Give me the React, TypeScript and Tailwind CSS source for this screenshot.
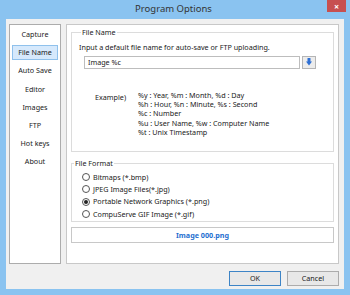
import React from "react";

const NAV = ["Capture", "File Name", "Auto Save", "Editor", "Images", "FTP", "Hot keys", "About"];

const FORMATS = [
  { label: "Bitmaps (*.bmp)", on: false },
  { label: "JPEG Image Files(*.jpg)", on: false },
  { label: "Portable Network Graphics (*.png)", on: true },
  { label: "CompuServe GIF Image (*.gif)", on: false },
];

const HELP = [
  "%y : Year, %m : Month, %d : Day",
  "%h : Hour, %n : Minute, %s : Second",
  "%c : Number",
  "%u : User Name, %w : Computer Name",
  "%t : Unix Timestamp",
];

function Radio({ on }: { on: boolean }) {
  return (
    <span className="w-[8px] h-[8px] rounded-full border border-[#555] bg-white flex items-center justify-center shrink-0">
      {on && <span className="w-[4px] h-[4px] rounded-full bg-[#222]" />}
    </span>
  );
}

export default function App() {
  return (
    <div
      className="w-[350px] h-[295px] bg-[#8ac3f0] flex flex-col text-[7.2px] text-[#1a1a1a] overflow-hidden"
      style={{ fontFamily: '"Noto Sans", "Open Sans", sans-serif' }}
    >
      {/* title bar */}
      <div className="h-[19px] shrink-0 flex items-start">
        <div className="flex-1 h-[19px] flex items-center justify-center pl-[20px] text-[9.5px] text-[#333]">
          Program Options
        </div>
        <div className="w-[19px] h-[12px] mr-[4px] bg-[#c75050] flex items-center justify-center text-white text-[9px] font-bold leading-none">
          ×
        </div>
      </div>

      {/* client */}
      <div className="mx-[6px] mb-[6px] h-[270px] bg-[#f0f0f0] flex flex-col pt-[5px] pl-[3px] pr-[5px]">
        <div className="flex gap-[5px] h-[240px] shrink-0">
          <nav className="w-[52px] bg-white border border-[#acacac] flex flex-col items-stretch pt-[2px] px-[2px]">
            {NAV.map((n) => (
              <div
                key={n}
                className={
                  "h-[15px] mb-[3.2px] flex items-center justify-center " +
                  (n === "File Name" ? "bg-[#d6e9fc] border border-[#8fc1ec]" : "")
                }
              >
                {n}
              </div>
            ))}
          </nav>

          <div className="flex-1 bg-white border border-[#c8c8c8] px-[4px] pt-[3px] flex flex-col">
            <fieldset className="border border-[#dcdcdc] h-[124px] px-[7px] shrink-0">
              <legend className="px-[1px] ml-[2px] leading-[8px]">File Name</legend>
              <div className="mt-[6px]">Input a default file name for auto-save or FTP uploading.</div>
              <div className="flex items-center gap-[2px] mt-[3px] ml-[5px]">
                <div className="w-[216px] h-[13px] border border-[#bdbdbd] flex items-center px-[3px]">Image %c</div>
                <div className="w-[14px] h-[13px] border border-[#b5b5b5] bg-[#ececec] flex items-center justify-center">
                  <svg width="6" height="8" viewBox="0 0 6 8">
                    <rect x="1.5" y="0" width="3" height="4" rx="0.6" fill="#2d6fd4" />
                    <path d="M0 3.5 L6 3.5 L3 7.5 Z" fill="#2d6fd4" />
                  </svg>
                </div>
              </div>
              <div className="flex mt-[23px] ml-[16px]">
                <div className="w-[43px]">Example)</div>
                <div className="flex flex-col leading-[9.3px] -mt-[1px]">
                  {HELP.map((h) => (
                    <div key={h}>{h}</div>
                  ))}
                </div>
              </div>
            </fieldset>

            <fieldset className="border border-[#dcdcdc] h-[63px] mt-[7px] px-[10px] shrink-0">
              <legend className="px-[1px] -ml-[8px] leading-[8px]">File Format</legend>
              <div className="flex flex-col mt-[4px]">
                {FORMATS.map((f) => (
                  <div key={f.label} className="h-[12.3px] flex items-center gap-[3px]">
                    <Radio on={f.on} />
                    <span>{f.label}</span>
                  </div>
                ))}
              </div>
            </fieldset>

            <div className="mt-[5px] h-[16px] shrink-0 border border-[#c8c8c8] flex items-center justify-center text-[#1f6fd0] font-bold">
              Image 000.png
            </div>
          </div>
        </div>

        <div className="flex justify-end gap-[6px] mt-[7px]">
          <button className="w-[52px] h-[15px] border border-[#3d84c6] bg-[#e8e8e8] flex items-center justify-center">OK</button>
          <button className="w-[52px] h-[15px] border border-[#acacac] bg-[#e8e8e8] flex items-center justify-center">Cancel</button>
        </div>
      </div>
    </div>
  );
}
